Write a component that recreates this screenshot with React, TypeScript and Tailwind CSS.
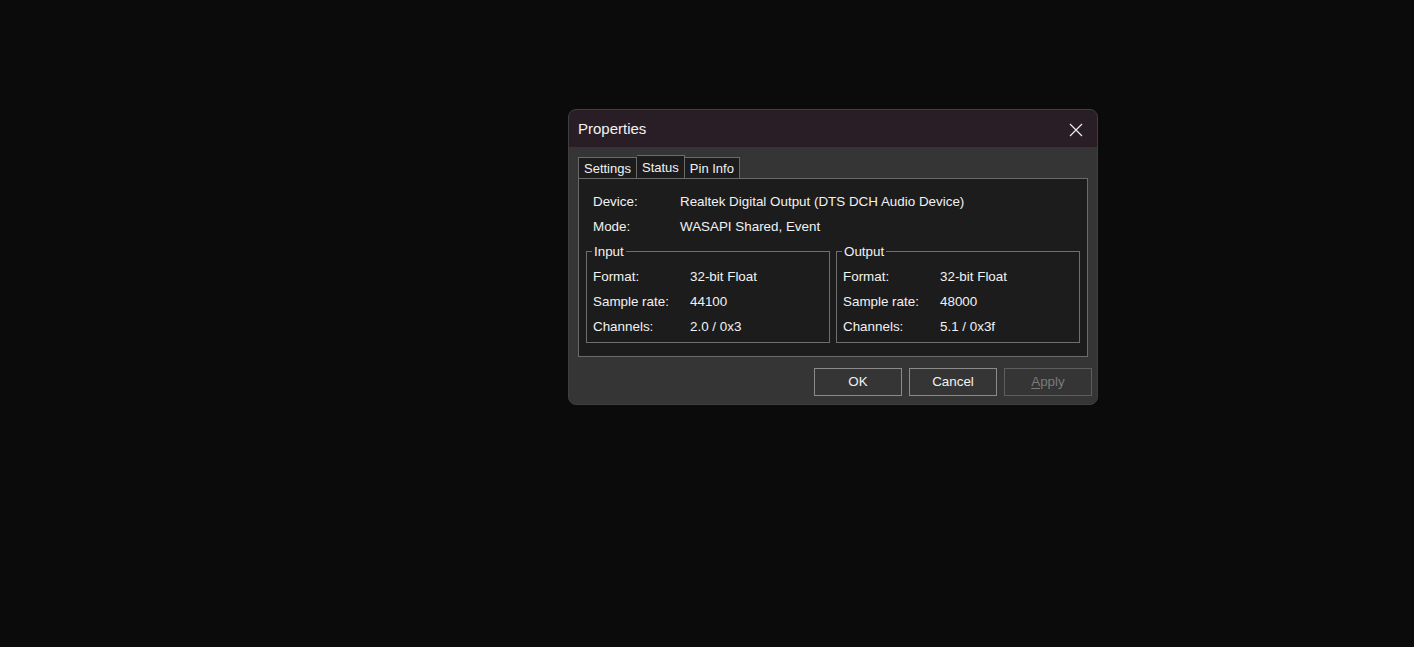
const font = { fontFamily: '"Segoe UI", "Liberation Sans", Arial, sans-serif' };

function Row({ label, value, valueX }: { label: string; value: string; valueX: string }) {
    return (
        <div className="flex h-[25px] items-center">
            <span className={valueX}>{label}</span>
            <span>{value}</span>
        </div>
    );
}

function Group({ title, rows }: { title: string; rows: [string, string][] }) {
    return (
        <div className="relative w-[244px] border border-[#6f6f6f] pl-[6px] pt-[13px] pb-[2px]">
            <span className="absolute -top-[9px] left-[5px] bg-[#1c1c1c] px-[2px] leading-[18px]">{title}</span>
            {rows.map(([l, v]) => (
                <Row key={l} label={l} value={v} valueX="w-[97px]" />
            ))}
        </div>
    );
}

export default function App() {
    return (
        <div className="min-h-screen w-full bg-[#0b0b0b] pl-[568px] pt-[109px]" style={font}>
            <div className="flex h-[296px] w-[530px] flex-col overflow-hidden rounded-[8px] border border-[#3f3f3f] bg-[#353535] text-[13.4px] text-[#f2f2f2]">
                {/* title bar */}
                <div className="flex h-[37px] shrink-0 items-center justify-between bg-[#2a1e26] pl-[9px] pr-[14px] pt-[2px]">
                    <span className="text-[15px]">Properties</span>
                    <svg width="14" height="14" viewBox="0 0 14 14" className="text-[#ececec]">
                        <path d="M1 1 L13 13 M13 1 L1 13" stroke="currentColor" strokeWidth="1.2" fill="none" />
                    </svg>
                </div>

                {/* body */}
                <div className="flex flex-1 flex-col pl-[9px] pt-[8px]">
                    {/* tabs */}
                    <div className="flex h-[23px] items-end text-[13px]">
                        <div className="flex h-[21px] items-center border border-b-0 border-[#6a6a6a] bg-[#1c1c1c] px-[5px] pt-[1px]">Settings</div>
                        <div className="flex h-[23px] items-center border border-b-0 border-l-0 border-[#6a6a6a] bg-[#1c1c1c] px-[5px] pt-[2px]">Status</div>
                        <div className="flex h-[21px] items-center border border-b-0 border-l-0 border-[#6a6a6a] bg-[#1c1c1c] px-[5px] pt-[1px]">Pin Info</div>
                    </div>

                    {/* tab page */}
                    <div className="h-[179px] w-[510px] border border-[#6a6a6a] bg-[#1c1c1c] px-[7px] pt-[11px]">
                        <div className="pl-[7px]">
                            <Row label="Device:" value="Realtek Digital Output (DTS DCH Audio Device)" valueX="w-[87px]" />
                            <Row label="Mode:" value="WASAPI Shared, Event" valueX="w-[87px]" />
                        </div>
                        <div className="mt-[11px] flex gap-[6px]">
                            <Group
                                title="Input"
                                rows={[
                                    ["Format:", "32-bit Float"],
                                    ["Sample rate:", "44100"],
                                    ["Channels:", "2.0 / 0x3"],
                                ]}
                            />
                            <Group
                                title="Output"
                                rows={[
                                    ["Format:", "32-bit Float"],
                                    ["Sample rate:", "48000"],
                                    ["Channels:", "5.1 / 0x3f"],
                                ]}
                            />
                        </div>
                    </div>

                    {/* buttons */}
                    <div className="mt-[11px] flex justify-end gap-[7px] pr-[5px]">
                        <button className="h-[28px] w-[88px] border border-[#8a8a8a] bg-[#353535] text-[#f2f2f2]">OK</button>
                        <button className="h-[28px] w-[88px] border border-[#8a8a8a] bg-[#353535] text-[#f2f2f2]">Cancel</button>
                        <button className="h-[28px] w-[88px] border border-[#5e5e5e] bg-[#353535] text-[#7a7a7a]" disabled>
                            <span className="underline underline-offset-2">A</span>pply
                        </button>
                    </div>
                </div>
            </div>
        </div>
    );
}
